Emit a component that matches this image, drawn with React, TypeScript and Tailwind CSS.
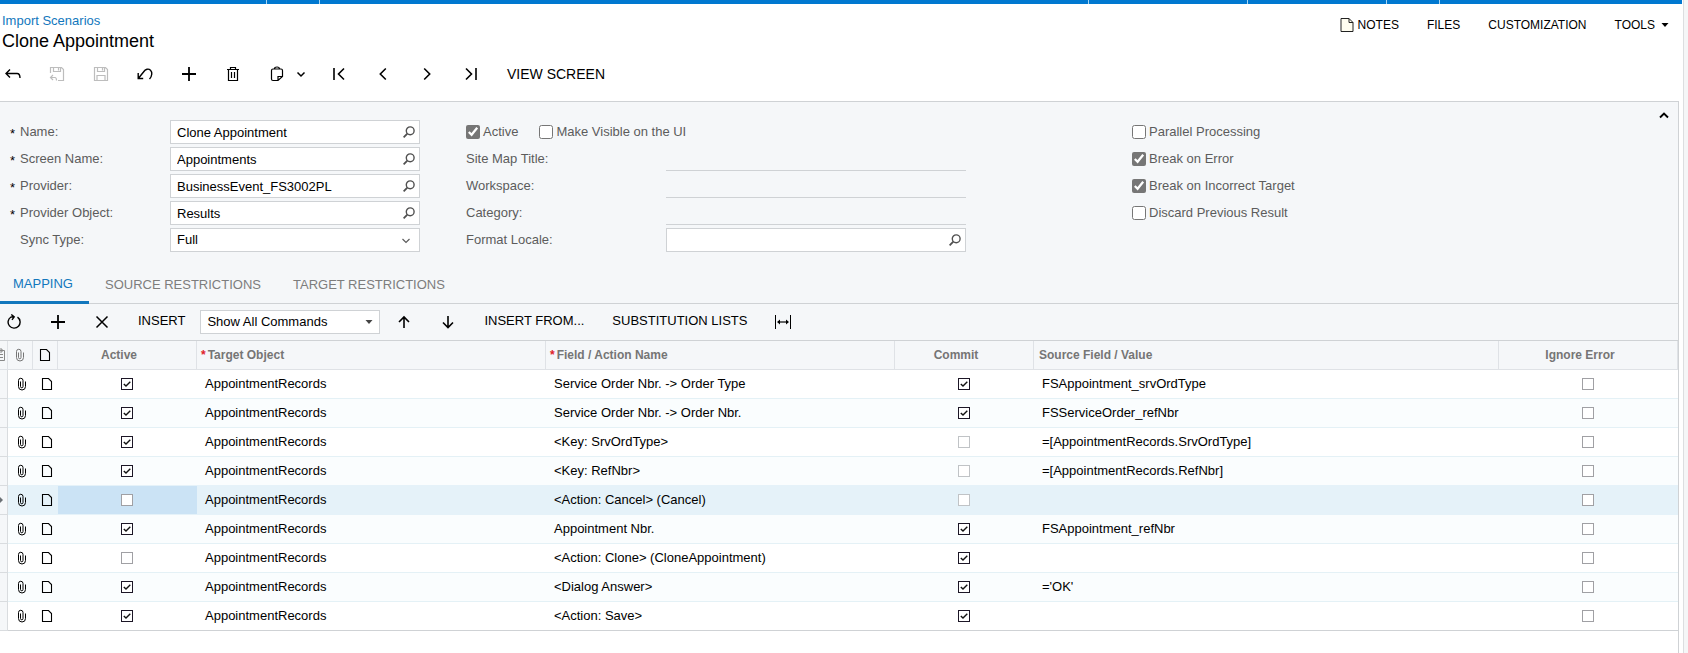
import { useState, type ReactNode } from "react";

type MappingRow = {
  active: boolean;
  target: string;
  field: string;
  commit: boolean;
  source: string;
};

const rows: MappingRow[] = [
  { active: true, target: "AppointmentRecords", field: "Service Order Nbr. -> Order Type", commit: true, source: "FSAppointment_srvOrdType" },
  { active: true, target: "AppointmentRecords", field: "Service Order Nbr. -> Order Nbr.", commit: true, source: "FSServiceOrder_refNbr" },
  { active: true, target: "AppointmentRecords", field: "<Key: SrvOrdType>", commit: false, source: "=[AppointmentRecords.SrvOrdType]" },
  { active: true, target: "AppointmentRecords", field: "<Key: RefNbr>", commit: false, source: "=[AppointmentRecords.RefNbr]" },
  { active: false, target: "AppointmentRecords", field: "<Action: Cancel> (Cancel)", commit: false, source: "" },
  { active: true, target: "AppointmentRecords", field: "Appointment Nbr.", commit: true, source: "FSAppointment_refNbr" },
  { active: false, target: "AppointmentRecords", field: "<Action: Clone> (CloneAppointment)", commit: true, source: "" },
  { active: true, target: "AppointmentRecords", field: "<Dialog Answer>", commit: true, source: "='OK'" },
  { active: true, target: "AppointmentRecords", field: "<Action: Save>", commit: true, source: "" },
];

function Icon({ children, size = 16, className = "" }: { children: ReactNode; size?: number; className?: string }) {
  return (
    <svg
      aria-hidden="true"
      className={["shrink-0", className].join(" ")}
      fill="none"
      height={size}
      stroke="currentColor"
      strokeWidth="1.4"
      viewBox={`0 0 ${size} ${size}`}
      width={size}
    >
      {children}
    </svg>
  );
}

function IconButton({ label, disabled, children }: { label: string; disabled?: boolean; children: ReactNode }) {
  return (
    <button
      aria-label={label}
      className="flex h-6 w-6 shrink-0 items-center justify-center disabled:text-[#bdbdbd]"
      disabled={disabled}
      type="button"
    >
      {children}
    </button>
  );
}

function SearchIcon() {
  return (
    <Icon size={12}>
      <circle cx="7.2" cy="4.8" r="3.9" />
      <path d="M4.3 7.7 0.6 11.4" strokeWidth="1.8" />
    </Icon>
  );
}

function ClipIcon() {
  return (
    <Icon className="mx-auto" size={14}>
      <path
        d="M5.5 4.500v5a1.200 1.200 0 0 0 2.500 0V3.500a2 2 0 0 0-4.500 0v6a3.400 3.400 0 0 0 7 0V4.500"
        strokeWidth="1"
      />
    </Icon>
  );
}

function PageIcon() {
  return (
    <Icon className="mx-auto" size={14}>
      <path d="M2.5 1.5h6l3 3v8h-9z" strokeWidth="1.1" />
    </Icon>
  );
}

function LookupField({ id, label, value }: { id: string; label: string; value: string }) {
  return (
    <div className="flex h-6 min-w-0 flex-1 border border-[#cfd2d5] bg-white">
      <input className="min-w-0 flex-1 pt-0.5 pl-1.5 text-black outline-none" defaultValue={value} id={id} />
      <button aria-label={`Look up ${label}`} className="flex w-5 items-center justify-center text-[#505050]" type="button">
        <SearchIcon />
      </button>
    </div>
  );
}

function RequiredLookup({ id, label, value }: { id: string; label: string; value: string }) {
  return (
    <div className="flex h-6">
      <label className="flex w-40 leading-6" htmlFor={id}>
        <span className="w-2.5 pt-0.5 text-black">*</span>
        {label}:
      </label>
      <LookupField id={id} label={label} value={value} />
    </div>
  );
}

function UnderlinedField({ id, label }: { id: string; label: string }) {
  return (
    <div className="flex h-6">
      <label className="w-50 leading-6" htmlFor={id}>
        {label}:
      </label>
      <input className="min-w-0 flex-1 border-b border-[#cfd2d5]" disabled id={id} />
    </div>
  );
}

function FormCheckbox({ label, checked }: { label: string; checked?: boolean }) {
  return (
    <label className="flex h-6 items-center gap-[3px]">
      <input className="h-3.5 w-3.5 accent-[#767676]" defaultChecked={checked} type="checkbox" />
      <span className="pb-px">{label}</span>
    </label>
  );
}

function GridCheckbox({ label, checked, faint }: { label: string; checked?: boolean; faint?: boolean }) {
  return (
    <span className="mx-auto grid h-3 w-3">
      <input
        aria-label={label}
        className={[
          "peer col-start-1 row-start-1 h-3 w-3 appearance-none border bg-white checked:border-[#1c1626]",
          faint ? "border-[#c0c3c6]" : "border-[#a0a0a4]",
        ].join(" ")}
        defaultChecked={checked}
        type="checkbox"
      />
      <svg
        aria-hidden="true"
        className="pointer-events-none invisible col-start-1 row-start-1 peer-checked:visible"
        fill="none"
        height="12"
        stroke="#111"
        strokeWidth="1.4"
        viewBox="0 0 12 12"
        width="12"
      >
        <path d="M2.8 6 5 8.1 9.3 3.8" />
      </svg>
    </span>
  );
}

function TopBar() {
  // Lower edge of the application menu with its group separators
  return (
    <div className="mr-px flex h-1 divide-x divide-[#a9d6f3]">
      <div className="w-[267px] bg-[#0078d0]" />
      <div className="w-[53px] bg-[#0078d0]" />
      <div className="w-[769px] bg-[#0078d0]" />
      <div className="w-[159px] bg-[#0078d0]" />
      <div className="w-[139px] bg-[#0078d0]" />
      <div className="w-[53px] bg-[#0078d0]" />
      <div className="flex-1 bg-[#0078d0]" />
    </div>
  );
}

function ScreenHeader() {
  return (
    <header className="flex justify-between pt-[9px] pl-0.5">
      <div>
        <a className="block text-[13px] leading-4 text-[#1277bd]" href="#scenarios">
          Import Scenarios
        </a>
        <h1 className="text-lg leading-6">Clone Appointment</h1>
      </div>
      <nav className="flex h-6 items-center gap-7 pr-3.5 text-xs">
        <button className="flex items-center gap-1" type="button">
          <svg aria-hidden="true" fill="none" height="16" stroke="#222" viewBox="0 0 14 16" width="14">
            <path d="M1 1.5h8l4 4v9H1z" fill="#fffdf0" />
            <path d="M9 1.5v4h4" />
          </svg>
          NOTES
        </button>
        <button type="button">FILES</button>
        <button type="button">CUSTOMIZATION</button>
        <button className="flex items-center gap-1.5" type="button">
          TOOLS
          <svg aria-hidden="true" height="4" viewBox="0 0 8 4" width="8">
            <path d="M0.5 0h7L4 4z" />
          </svg>
        </button>
      </nav>
    </header>
  );
}

function ScreenToolbar() {
  return (
    <div className="mt-[9px] mb-[15px] flex h-6 items-center gap-5 pl-px text-sm">
      <IconButton label="Back">
        <Icon>
          <path d="M5 3.5 1 7.5l4 4M1 7.500h11q3 0 3 4.500" />
        </Icon>
      </IconButton>
      <IconButton disabled label="Save and close">
        <Icon>
          <path d="M1.5 7V1.5h11l2 2v11H9M4.5 1.5v4h7v-4M9.5 2v2.5" strokeWidth="1.2" />
          <path d="M4 9 1.5 11.500 4 14M1.500 11.500H6q1.500 0 1.500 3" strokeWidth="1.2" />
        </Icon>
      </IconButton>
      <IconButton disabled label="Save">
        <Icon>
          <path d="M1.5 1.5h11l2 2v11h-13zM4.5 1.5v4h7v-4M9.5 2v2.5M4 14.5v-5h8v5" strokeWidth="1.2" />
        </Icon>
      </IconButton>
      <IconButton label="Undo">
        <Icon>
          <path d="M1.200 7v5.500h5M1.500 12.200 6.500 6C8.500 3 11.500 2.200 13.500 4.200s1.700 6-1 8.800" />
        </Icon>
      </IconButton>
      <IconButton label="Add new record">
        <Icon>
          <path d="M8 1v14M1 8h14" strokeWidth="1.8" />
        </Icon>
      </IconButton>
      <IconButton label="Delete">
        <Icon>
          <path d="M2 3.500h12M5.500 3.500v-2h5v2M3.500 3.500v11h9v-11M6.500 6v6M9.500 6v6" strokeWidth="1.200" />
        </Icon>
      </IconButton>
      <div className="flex w-[42px] items-center justify-between">
        <IconButton label="Clipboard">
          <Icon>
            <path
              d="M9 14.500H4q-1.500 0-1.500-1.500V4.500Q2.500 3 4 3h8q1.500 0 1.500 1.500v6zM9 14.500v-4h4.500M5.500 3q0-2 2.500-2t2.500 2"
              strokeWidth="1.200"
            />
          </Icon>
        </IconButton>
        <button aria-label="Clipboard options" className="flex h-6 items-center" type="button">
          <Icon size={12}>
            <path d="m2.500 4.500 3.500 3.500 3.500-3.500" strokeWidth="1.500" />
          </Icon>
        </button>
      </div>
      <IconButton label="First record">
        <Icon>
          <path d="M3 2v12M13 2.500 7.500 8l5.500 5.500" strokeWidth="1.600" />
        </Icon>
      </IconButton>
      <IconButton label="Previous record">
        <Icon>
          <path d="M10.800 2.500 5.300 8l5.500 5.500" strokeWidth="1.600" />
        </Icon>
      </IconButton>
      <IconButton label="Next record">
        <Icon>
          <path d="M5.200 2.500 10.700 8l-5.500 5.500" strokeWidth="1.600" />
        </Icon>
      </IconButton>
      <IconButton label="Last record">
        <Icon>
          <path d="M13 2v12M3 2.500 8.500 8 3 13.500" strokeWidth="1.600" />
        </Icon>
      </IconButton>
      <button className="ml-1" type="button">
        VIEW SCREEN
      </button>
    </div>
  );
}

function ScenarioForm() {
  return (
    <section className="flex items-start pr-2 pl-2.5 text-[#5c5c5c]">
      <div className="mt-[18px] flex w-[410px] flex-col gap-[3px]">
        <RequiredLookup id="name" label="Name" value="Clone Appointment" />
        <RequiredLookup id="screen-name" label="Screen Name" value="Appointments" />
        <RequiredLookup id="provider" label="Provider" value="BusinessEvent_FS3002PL" />
        <RequiredLookup id="provider-object" label="Provider Object" value="Results" />
        <div className="flex h-6">
          <label className="w-40 pl-2.5 leading-6" htmlFor="sync-type">
            Sync Type:
          </label>
          <div className="grid h-6 flex-1 items-center">
            <select
              className="col-start-1 row-start-1 h-6 w-full appearance-none border border-[#cfd2d5] bg-white pl-1.5 text-black"
              id="sync-type"
            >
              <option>Full</option>
            </select>
            <Icon className="pointer-events-none col-start-1 row-start-1 mr-2 justify-self-end" size={12}>
              <path d="m2.500 5 3.500 3.500 3.500-3.500" strokeWidth="1.200" />
            </Icon>
          </div>
        </div>
      </div>

      <div className="mt-[18px] ml-[46px] flex w-[500px] flex-col gap-[3px]">
        <div className="flex gap-[21px]">
          <FormCheckbox checked label="Active" />
          <FormCheckbox label="Make Visible on the UI" />
        </div>
        <UnderlinedField id="site-map-title" label="Site Map Title" />
        <UnderlinedField id="workspace" label="Workspace" />
        <UnderlinedField id="category" label="Category" />
        <div className="flex h-6">
          <label className="w-50 leading-6" htmlFor="format-locale">
            Format Locale:
          </label>
          <LookupField id="format-locale" label="Format Locale" value="" />
        </div>
      </div>

      <div className="mt-[18px] ml-[166px] flex flex-col gap-[3px]">
        <FormCheckbox label="Parallel Processing" />
        <FormCheckbox checked label="Break on Error" />
        <FormCheckbox checked label="Break on Incorrect Target" />
        <FormCheckbox label="Discard Previous Result" />
      </div>

      <button aria-label="Collapse" className="mt-[7px] ml-auto text-black" type="button">
        <Icon size={12}>
          <path d="m2 8.500 4-4 4 4" strokeWidth="1.900" />
        </Icon>
      </button>
    </section>
  );
}

const tabs = ["MAPPING", "SOURCE RESTRICTIONS", "TARGET RESTRICTIONS"];

function Tabs() {
  const [current, setCurrent] = useState(tabs[0]);

  return (
    <div className="mt-3.5 flex h-[38px] border-b border-[#cfd2d5]" role="tablist">
      {tabs.map((tab) => (
        <button
          aria-selected={tab === current}
          className={[
            "-mb-px px-4 first:pl-[13px]",
            tab === current ? "border-b-3 border-[#1277bd] text-[#1277bd]" : "text-[#7d7d7d]",
          ].join(" ")}
          key={tab}
          onClick={() => setCurrent(tab)}
          role="tab"
          type="button"
        >
          {tab}
        </button>
      ))}
    </div>
  );
}

function GridToolbar() {
  return (
    <div className="flex h-9 items-center pl-0.5">
      <div className="flex gap-5">
        <IconButton label="Refresh">
          <Icon>
            <path d="M11.500 3.200A6 6 0 1 1 5 3L8 2.800M5.300.500 8.200 2.900 6 5.800" />
          </Icon>
        </IconButton>
        <IconButton label="Add row">
          <Icon>
            <path d="M8 1v14M1 8h14" strokeWidth="1.800" />
          </Icon>
        </IconButton>
        <IconButton label="Delete row">
          <Icon>
            <path d="m2.500 2.500 11 11M13.500 2.500l-11 11" strokeWidth="1.500" />
          </Icon>
        </IconButton>
      </div>
      <button className="ml-6 pb-0.5" type="button">
        INSERT
      </button>
      <div className="ml-[15px] grid w-[180px] items-center">
        <select
          aria-label="Commands"
          className="col-start-1 row-start-1 h-6 w-full appearance-none border border-[#cfd2d5] bg-white pl-1.5 text-black"
        >
          <option>Show All Commands</option>
        </select>
        <svg
          aria-hidden="true"
          className="pointer-events-none col-start-1 row-start-1 mr-[7px] justify-self-end fill-[#444]"
          height="4"
          viewBox="0 0 8 4"
          width="8"
        >
          <path d="M0.5 0h7L4 4z" />
        </svg>
      </div>
      <div className="ml-3 flex gap-5">
        <IconButton label="Move up">
          <Icon>
            <path d="M8 14V3M3 8l5-5 5 5" strokeWidth="1.600" />
          </Icon>
        </IconButton>
        <IconButton label="Move down">
          <Icon>
            <path d="M8 2v11.500M3 8.500l5 5 5-5" strokeWidth="1.600" />
          </Icon>
        </IconButton>
      </div>
      <button className="ml-6 pb-0.5" type="button">
        INSERT FROM...
      </button>
      <button className="ml-7 pb-0.5" type="button">
        SUBSTITUTION LISTS
      </button>
      <span className="ml-6">
        <IconButton label="Fit columns">
          <Icon>
            <path d="M.5 1v14M15.500 1v14" strokeWidth="1" />
            <path d="M3 8h10" strokeWidth="1.200" />
            <path d="M5 5.500v5L2 8zM11 5.500v5L14 8z" fill="currentColor" stroke="none" />
          </Icon>
        </IconButton>
      </span>
    </div>
  );
}

function MappingGrid() {
  const head = "h-[29px] border-r border-b border-[#dfe2e6] p-0 font-bold";

  return (
    <table className="w-full table-fixed border-separate border-spacing-0 border-t border-[#cfd2d5]">
      <thead className="text-left text-xs text-[#757575]">
        <tr>
          <th aria-label="Row" className={`${head} w-2 overflow-hidden`}>
            <svg aria-hidden="true" fill="none" height="14" stroke="#888" viewBox="0 0 7 14" width="7">
              <path d="M0 2.500h4.500v10H0M0 1h2v3H0M0 6.500h3M0 9.500h3" />
            </svg>
          </th>
          <th aria-label="Files" className={`${head} w-[25px]`}>
            <ClipIcon />
          </th>
          <th aria-label="Notes" className={`${head} w-[25px] text-black`}>
            <PageIcon />
          </th>
          <th className={`${head} w-[139px] pr-4 text-center`}>Active</th>
          <th className={`${head} w-[349px] pl-1`}>
            <span className="mr-0.5 text-[#e0202a]">*</span>Target Object
          </th>
          <th className={`${head} w-[349px] pl-1`}>
            <span className="mr-0.5 text-[#e0202a]">*</span>Field / Action Name
          </th>
          <th className={`${head} w-[139px] pr-4 text-center`}>Commit</th>
          <th className={`${head} pl-[5px]`}>Source Field / Value</th>
          <th className={`${head} w-[179px] pr-4 text-center`}>Ignore Error</th>
        </tr>
      </thead>
      <tbody>
        {rows.map((row, index) => {
          const selected = index === 4;
          const last = index === rows.length - 1;
          const cell = [
            "h-[29px] border-b p-0",
            last ? "border-[#cfd2d5]" : selected || index === 3 ? "border-[#e5f2f9]" : "border-[#e4f1f6]",
          ].join(" ");

          return (
            <tr className={selected ? "bg-[#e5f2f9]" : "bg-white even:bg-[#fafdfe]"} key={index}>
              <td className="h-[29px] border-r border-b border-[#d9dcdf] bg-[#f5f7f9] p-0">
                {selected ? (
                  <svg aria-hidden="true" fill="#6b7075" height="6" viewBox="0 0 4 6" width="4">
                    <path d="M0 0 3 3 0 6z" />
                  </svg>
                ) : null}
              </td>
              <td className={`${cell} pl-0.5`}>
                <ClipIcon />
              </td>
              <td className={`${cell} pl-0.5`}>
                <PageIcon />
              </td>
              <td className={`${cell} pr-0.5 ${selected ? "bg-[#cbe3f5]" : ""}`}>
                <GridCheckbox checked={row.active} label="Active" />
              </td>
              <td className={`${cell} pl-2`}>{row.target}</td>
              <td className={`${cell} pl-2`}>{row.field}</td>
              <td className={`${cell} pr-0.5`}>
                <GridCheckbox checked={row.commit} faint label="Commit" />
              </td>
              <td className={`${cell} pl-2`}>{row.source}</td>
              <td className={`${cell} pr-0.5`}>
                <GridCheckbox label="Ignore Error" />
              </td>
            </tr>
          );
        })}
      </tbody>
    </table>
  );
}

export default function App() {
  return (
    <div className="min-h-screen bg-[#f5f6f7] pr-1 font-['Liberation_Sans',Arial,sans-serif] text-[13px] leading-4 text-black">
      <div className="flex min-h-screen flex-col border-r border-[#dcdee0] bg-white">
        <TopBar />
        <ScreenHeader />
        <ScreenToolbar />
        <main className="mr-1 flex flex-1 flex-col border-t border-r border-[#cfd2d5]">
          <div className="bg-[#f5f7f9]">
            <ScenarioForm />
            <Tabs />
            <GridToolbar />
            <MappingGrid />
          </div>
        </main>
      </div>
    </div>
  );
}
